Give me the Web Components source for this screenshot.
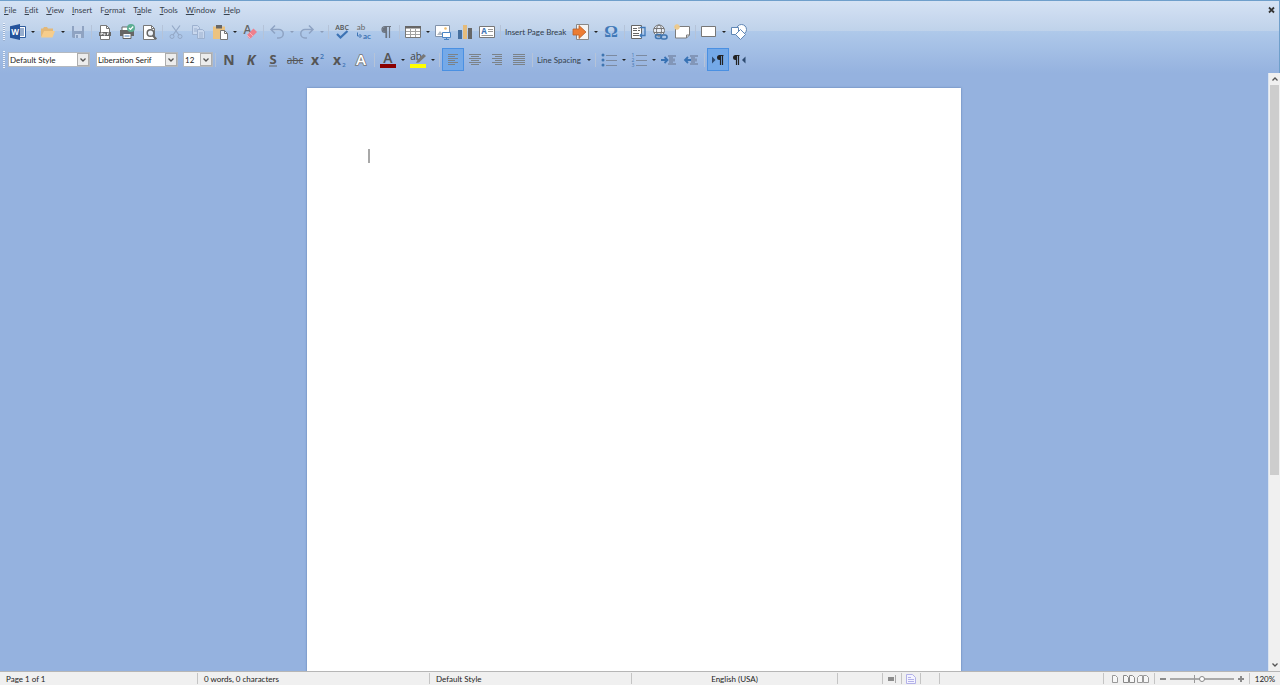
<!DOCTYPE html>
<html lang="en">
<head>
<meta charset="utf-8">
<title>Writer</title>
<style>
  html, body { height: 100%; }
  body {
    margin: 0;
    overflow: hidden;
    font: 8px/12px Lato, "Open Sans", sans-serif;
    color: #333;
  }
</style>
</head>
<body>
<writer-app>
  <menu-bar slot="header">
    <menu-item key="F">File</menu-item>
    <menu-item key="E">Edit</menu-item>
    <menu-item key="V">View</menu-item>
    <menu-item key="I">Insert</menu-item>
    <menu-item key="o">Format</menu-item>
    <menu-item key="a">Table</menu-item>
    <menu-item key="T">Tools</menu-item>
    <menu-item key="W">Window</menu-item>
    <menu-item key="H">Help</menu-item>
  </menu-bar>

  <tool-bar slot="header" label="Standard">
    <tool-button icon="new" label="New" menu></tool-button>
    <tool-button icon="open" label="Open" menu></tool-button>
    <tool-button icon="save" label="Save" disabled></tool-button>
    <tool-separator></tool-separator>
    <tool-button icon="pdf" label="Export as PDF"></tool-button>
    <tool-button icon="print" label="Print"></tool-button>
    <tool-button icon="preview" label="Print Preview"></tool-button>
    <tool-separator></tool-separator>
    <tool-button icon="cut" label="Cut" disabled></tool-button>
    <tool-button icon="copy" label="Copy" disabled></tool-button>
    <tool-button icon="paste" label="Paste" menu></tool-button>
    <tool-button icon="clear" label="Clear Formatting"></tool-button>
    <tool-separator></tool-separator>
    <tool-button icon="undo" label="Undo" menu disabled></tool-button>
    <tool-button icon="redo" label="Redo" menu disabled></tool-button>
    <tool-separator></tool-separator>
    <tool-button icon="spelling" label="Spelling"></tool-button>
    <tool-button icon="autospell" label="Auto Spellcheck"></tool-button>
    <tool-button icon="marks" label="Formatting Marks"></tool-button>
    <tool-separator></tool-separator>
    <tool-button icon="table" label="Insert Table" menu></tool-button>
    <tool-button icon="image" label="Insert Image"></tool-button>
    <tool-button icon="chart" label="Insert Chart"></tool-button>
    <tool-button icon="textbox" label="Insert Text Box"></tool-button>
    <tool-separator></tool-separator>
    <tool-button>Insert Page Break</tool-button>
    <tool-button icon="field" label="Insert Field" menu></tool-button>
    <tool-button icon="omega" label="Special Character"></tool-button>
    <tool-separator></tool-separator>
    <tool-button icon="footnote" label="Insert Footnote"></tool-button>
    <tool-button icon="link" label="Insert Hyperlink"></tool-button>
    <tool-button icon="comment" label="Insert Comment"></tool-button>
    <tool-separator></tool-separator>
    <tool-button icon="rect" label="Rectangle" menu></tool-button>
    <tool-button icon="shapes" label="Show Draw Functions"></tool-button>
  </tool-bar>

  <tool-bar slot="header" label="Formatting">
    <tool-combo label="Paragraph Style" value="Default Style"></tool-combo>
    <tool-combo label="Font Name" value="Liberation Serif"></tool-combo>
    <tool-combo label="Font Size" value="12" small></tool-combo>
    <tool-separator></tool-separator>
    <tool-button icon="bold" label="Bold"></tool-button>
    <tool-button icon="italic" label="Italic"></tool-button>
    <tool-button icon="underline" label="Underline"></tool-button>
    <tool-button icon="strike" label="Strikethrough"></tool-button>
    <tool-button icon="super" label="Superscript"></tool-button>
    <tool-button icon="sub" label="Subscript"></tool-button>
    <tool-button icon="outline" label="Outline"></tool-button>
    <tool-separator></tool-separator>
    <tool-button icon="color" label="Font Color" menu></tool-button>
    <tool-button icon="highlight" label="Highlighting" menu></tool-button>
    <tool-separator></tool-separator>
    <tool-button icon="left" label="Align Left" active></tool-button>
    <tool-button icon="center" label="Center"></tool-button>
    <tool-button icon="right" label="Align Right"></tool-button>
    <tool-button icon="justify" label="Justified"></tool-button>
    <tool-separator></tool-separator>
    <tool-button menu>Line Spacing</tool-button>
    <tool-separator></tool-separator>
    <tool-button icon="bullets" label="Bullets" menu></tool-button>
    <tool-button icon="numbers" label="Numbering" menu></tool-button>
    <tool-button icon="indent" label="Increase Indent"></tool-button>
    <tool-button icon="outdent" label="Decrease Indent"></tool-button>
    <tool-separator></tool-separator>
    <tool-button icon="ltr" label="Left-To-Right" active></tool-button>
    <tool-button icon="rtl" label="Right-To-Left"></tool-button>
  </tool-bar>

  <document-page></document-page>
  <scroll-bar slot="scroll"></scroll-bar>

  <status-bar slot="footer">
    <status-cell>Page 1 of 1</status-cell>
    <status-cell>0 words, 0 characters</status-cell>
    <status-cell>Default Style</status-cell>
    <status-cell center>English (USA)</status-cell>
    <status-cell></status-cell>
    <status-cell center><app-icon name="selection"></app-icon></status-cell>
    <status-cell center><app-icon name="saved"></app-icon></status-cell>
    <status-cell></status-cell>
    <status-cell></status-cell>
    <status-cell center><view-layout></view-layout></status-cell>
    <status-cell center><zoom-slider></zoom-slider></status-cell>
    <status-cell center>120%</status-cell>
  </status-bar>
</writer-app>

<script>
// horizontal rules used by the alignment icons, [x1, x2] for each line
const rules = list => `<g stroke="#7b8288">${list.map(([a, b], i) => `<path d="M${a} ${2.5 + i * 2}H${b}"/>`).join('')}</g>`

const TEXT = 'font-family="Open Sans, Noto Sans, sans-serif" text-anchor="middle"'
const SMALL = 'font-family="Lato, sans-serif" font-size="8" text-anchor="middle"'

// 16x16 drawings
const ICONS = {
  new: `<path d="M7 2.5h8.5v11H7z" fill="#fff" stroke="#2f5c9d"/><path d="M9 5h5M9 7h5M9 9h5M9 11h5" stroke="#2f5c9d"/>
    <path d="M0 2.2 10 0v16L0 13.8z" fill="#25539b"/><text x="5" y="11" font-size="8" font-weight="700" fill="#fff" ${TEXT}>W</text>`,
  open: `<path d="M1 13V4.5h2l1-1.5h3l1 1.5h5V7H5z" fill="#e3b878"/><path d="M4 7h11l-2.5 6.5H1z" fill="#f6cd8c"/>`,
  save: `<path d="M2 2h12v12H3l-1-1z" fill="#8fa3c2"/><path d="M4 2h8v5H4z" fill="#c3d3ea"/><path d="M5 10h6v4H5z" fill="#c3d3ea"/><path d="M6 11h2v3H6z" fill="#8fa3c2"/>`,
  pdf: `<path d="M3.5 1.5h6l3 3v11h-9z" fill="#fff" stroke="#777"/><path d="M9.5 1.5v3h3" fill="none" stroke="#777"/>
    <path d="M2 8h12v4H2z" fill="#666"/><path d="M4 11V9h1.5v1H4M7 9v2h1V9.5M10.5 11V9H12M10.5 10h1" stroke="#fff" stroke-width=".8" fill="none"/>`,
  print: `<path d="M3 3h8v4H3z" fill="#fff" stroke="#666"/><path d="M1 6h14v6H1z" fill="#666"/><path d="M4 9.5h8v5H4z" fill="#fff" stroke="#666"/>
    <path d="M5.5 12h5" stroke="#4a7ebb"/><circle cx="12" cy="4" r="4" fill="#5cae93"/><path d="m10 4 1.5 1.5L14.2 2.5" fill="none" stroke="#fff" stroke-width="1.2"/>`,
  preview: `<path d="M2.5 1.5h8l3 3v11h-11z" fill="#fff" stroke="#777"/><path d="M10.5 1.5v3h3" fill="none" stroke="#777"/>
    <circle cx="9.5" cy="9" r="3.3" fill="#eef3fa" stroke="#666" stroke-width="1.5"/><path d="m11.8 11.5 3.5 3.8" stroke="#666" stroke-width="2"/>`,
  cut: `<g fill="none" stroke="#94a8c6"><path d="M4 1.5 11 11M12 1.5 5 11" stroke-width="1.2"/><circle cx="4" cy="12.5" r="2"/><circle cx="12" cy="12.5" r="2"/></g>`,
  copy: `<g fill="#c9d8ee" stroke="#9db1cf"><path d="M2.5 1.5h5l2 2v7h-7z"/><path d="M7.5 5.5h5l2 2v7h-7z"/></g><path d="M4 5h3M4 7h3M9 9h4M9 11h4M9 13h4" stroke="#9db1cf"/>`,
  paste: `<path d="M1 2.5h12V15H1z" fill="#ecc381"/><path d="M4 1h6v3.5H4z" fill="#666"/><path d="M8.5 6.5h4l3 3v6h-7z" fill="#fff" stroke="#777"/><path d="M12.5 6.5v3h3" fill="none" stroke="#777"/>`,
  clear: `<text x="5.5" y="9.5" font-size="12" font-weight="600" fill="#666" ${TEXT}>A</text><path d="m5 11 6.5-6.5L15 8l-6.5 6.5H7z" fill="#ee7f8d"/><path d="m5 11 3.5 3.5M7.5 8.5 11 12" stroke="#f8b5bd"/>`,
  undo: `<path d="M6 1.5 2 5.5l4 4M2.5 5.5H10a4 4 0 0 1 0 8.5H8" fill="none" stroke="#8ea3c3" stroke-width="1.5"/>`,
  redo: `<path d="m10 1.5 4 4-4 4M13.5 5.5H6A4 4 0 0 0 6 14h2" fill="none" stroke="#8ea3c3" stroke-width="1.5"/>`,
  spelling: `<text x="8" y="6" font-size="7" font-weight="600" fill="#555" ${TEXT}>ABC</text><path d="m3 10 3.5 3.5L13.5 7" fill="none" stroke="#3d73b4" stroke-width="2.2"/>`,
  autospell: `<text x="5" y="6" fill="#666" ${SMALL}>ab</text><text x="11" y="15" font-weight="700" fill="#3d73b4" ${SMALL}>ac</text><path d="M1.5 8.5V12h3M3.5 10l2 2-2 2" fill="none" stroke="#3d73b4"/>`,
  marks: `<path d="M13 2.5H7a3 3 0 0 0 0 6h1V14M8.5 2v12M11.5 2v12" fill="none" stroke="#6c7480" stroke-width="1.2"/><path d="M8 3v5H7a2.5 2.5 0 0 1 0-5z" fill="#6c7480"/>`,
  table: `<path d="M.5 2.5h15v11H.5z" fill="#fff" stroke="#777"/><path d="M0 2h16v2.5H0z" fill="#666"/><path d="M1 7.5h14M1 10.5h14M5.5 5v8M10.5 5v8" stroke="#a2a2a2"/>`,
  image: `<path d="M.5 1.5h14v11H.5z" fill="#fff" stroke="#8293ab"/><circle cx="10.5" cy="4.5" r="1.3" fill="#f0bd6c"/><path d="m2 11 3-4 2.5 3L9 8l3 3z" fill="#b5bcc5"/>
    <path d="M7.5 8.5h8v5h-8z" fill="#fff" stroke="#4a85c5"/><path d="M11.5 14v1.5M9 15.5h5" stroke="#4a85c5"/>`,
  chart: `<path d="M1 6h4v9H1z" fill="#456f9f"/><path d="M6 1h4v14H6z" fill="#e4bb7b"/><path d="M11 4h4v11h-4z" fill="#666"/>`,
  textbox: `<path d="M.5 2.5h15v11H.5z" fill="#fff" stroke="#777"/><text x="5" y="9.5" font-size="8" font-weight="700" fill="#3d73b4" ${TEXT}>A</text><path d="M9 5.5h5M9 7.5h5M2.5 11.5H14" stroke="#999"/>`,
  field: `<path d="M3.5.5h12v15h-12z" fill="#f4f4f4" stroke="#888"/><path d="M0 5h6V1.5L13 8l-7 6.5V11H0z" fill="#ec7c33" stroke="#b9602a" stroke-width=".8"/>`,
  omega: `<text x="8" y="13" font-size="17" font-weight="700" fill="#4179b8" text-anchor="middle" font-family="Liberation Serif, serif">Ω</text>`,
  footnote: `<path d="M1.5 1.5h10v13h-10z" fill="#fff" stroke="#666"/><path d="M3 4.5h4M3 6.5h4M3 9.5h6M3 11.5h6M8 4h2M8 6.5h2" stroke="#666"/><path d="M10 3.5h5v8h-5M12 9.5l-2 2 2 2" fill="none" stroke="#4179b8" stroke-width="1.3"/>`,
  link: `<g fill="none" stroke="#777"><circle cx="7" cy="6.5" r="5.5" fill="#e8eef7"/><ellipse cx="7" cy="6.5" rx="2.5" ry="5.5"/><path d="M2 4.5h10M2 8.5h10"/></g>
    <g fill="none" stroke="#3f75b0" stroke-width="1.6"><rect x="3.5" y="10.5" width="6" height="4" rx="2"/><rect x="9" y="11" width="6" height="4" rx="2"/></g>`,
  comment: `<path d="M1.5 2.5h14V11l-3 3h-11z" fill="#fff" stroke="#7c7c7c"/><path d="M15.5 11h-3v3" fill="none" stroke="#7c7c7c"/><path d="M3 0v6M0 3h6M1 1l4 4M5 1 1 5" stroke="#ecca8e" stroke-width="1.4"/>`,
  rect: `<path d="M.5 2.5h14v10H.5z" fill="#fff" stroke="#777"/>`,
  shapes: `<g fill="#fff" stroke="#5f86b5"><circle cx="10.5" cy="5.5" r="5"/><path d="M.5 3.5h7v7h-7z"/><path d="m9.5 5.5 5 5-5 5-5-5z"/></g>`,
  bold: `<text x="8" y="13" font-size="14" font-weight="700" fill="#555" ${TEXT}>N</text>`,
  italic: `<text x="8" y="13" font-size="14" font-weight="700" font-style="italic" fill="#555" ${TEXT}>K</text>`,
  underline: `<text x="8" y="12" font-size="13" font-weight="700" fill="#555" ${TEXT}>S</text><path d="M4 14h8" stroke="#666"/>`,
  strike: `<text x="8" y="12" font-size="10" font-weight="400" fill="#555" ${TEXT}>abc</text><path d="M0 8.5h16" stroke="#555"/>`,
  super: `<text x="6" y="13" font-size="14" font-weight="700" fill="#555" ${TEXT}>x</text><text x="13" y="7" font-size="7" font-weight="600" fill="#3d73b4" ${TEXT}>2</text>`,
  sub: `<text x="6" y="13" font-size="14" font-weight="700" fill="#555" ${TEXT}>x</text><text x="13" y="15" font-size="6" font-weight="600" fill="#3d73b4" ${TEXT}>2</text>`,
  outline: `<text x="8" y="13" font-size="15" font-weight="600" fill="#fff" stroke="#777" stroke-width="1.6" paint-order="stroke" ${TEXT}>A</text>`,
  color: `<text x="8" y="11" font-size="14" font-weight="600" fill="#555" ${TEXT}>A</text><path d="M0 12h16v4H0z" fill="#8b0000"/>`,
  highlight: `<text x="6" y="8" font-size="10" fill="#444" ${TEXT}>ab</text><path d="m6 11 1.5-3 6-6L16 4 9 10.5z" fill="#777"/><path d="M0 12h16v4H0z" fill="#ff0"/>`,
  left: rules([[3, 13], [3, 10], [3, 13], [3, 10], [3, 13], [3, 10]]),
  center: rules([[2, 14], [4, 12], [2, 14], [4, 12], [2, 14], [4, 12]]),
  right: rules([[3, 13], [6, 13], [3, 13], [6, 13], [3, 13], [6, 13]]),
  justify: rules([[2, 14], [2, 14], [2, 14], [2, 14], [2, 14], [2, 14]]),
  bullets: `<g fill="#3f75b0"><circle cx="2" cy="3" r="1.5"/><circle cx="2" cy="8" r="1.5"/><circle cx="2" cy="13" r="1.5"/></g><path d="M5 3.5h11M5 8.5h11M5 13.5h11" stroke="#7c8aa0"/>`,
  numbers: `<g font-size="5" fill="#3f75b0" ${TEXT}><text x="2" y="5">1</text><text x="2" y="10">2</text><text x="2" y="15">3</text></g><path d="M5 3.5h11M5 8.5h11M5 13.5h11" stroke="#7c8aa0"/>`,
  indent: `<path d="M7 3h8v2h-3v1.5h2v3h-2V11h3v2H7v-2h1V5H7z" fill="#8296b8"/><path d="M0 8h6M3.5 5 6.5 8l-3 3" fill="none" stroke="#3872b4" stroke-width="1.8"/>`,
  outdent: `<path d="M7 3h8v2h-3v1.5h2v3h-2V11h3v2H7v-2h1V5H7z" fill="#8296b8"/><path d="M2 8h6M5 5 2 8l3 3" fill="none" stroke="#3872b4" stroke-width="1.8"/>`,
  ltr: `<path d="M2 4.5 5.5 8 2 11.5z" fill="#2d4a70"/><path d="M10.5 3v10M12.5 3v10M9 3.5h4.5" stroke="#222" stroke-width="1.2"/><path d="M11 3v5H9.5a2.5 2.5 0 0 1 0-5z" fill="#222"/>`,
  rtl: `<path d="M13.5 4.5 10 8l3.5 3.5z" fill="#2d4a70"/><path d="M4.5 3v10M6.5 3v10M3 3.5h4.5" stroke="#222" stroke-width="1.2"/><path d="M5 3v5H3.5a2.5 2.5 0 0 1 0-5z" fill="#222"/>`,
  selection: `<path d="M4 6h6v4H4z" fill="#8c8c8c"/><path d="M11.5 4v8" stroke="#aaa"/>`,
  saved: `<path d="M3.5 3.5h6l3 3v6h-9z" fill="#f4f4ff" stroke="#b3b1e8"/><path d="M5 6.5h3M5 8.5h6M5 10.5h6" stroke="#b3b1e8"/>`,
  pageOne: `<path d="M5.5 4.5h3l2 2v5h-5z" fill="#f7f7f7" stroke="#999"/>`,
  pageMulti: `<path d="M2.5 4.5h3l2 2v5h-5zM8.5 4.5h3l2 2v5h-5z" fill="#f7f7f7" stroke="#888"/>`,
  pageBook: `<path d="M2.5 6.5l2-2h3v7h-5zM8.5 4.5h3l2 2v5h-5z" fill="#f7f7f7" stroke="#999"/>`,
  chevron: `<path d="m5.5 6.5 2.5 2.5 2.5-2.5" fill="none" stroke="#555" stroke-width="1.3"/>`,
  chevronUp: `<path d="m5.5 9.5 2.5-2.5 2.5 2.5" fill="none" stroke="#555" stroke-width="1.3"/>`,
  close: `<path d="m6 5.5 5 5M11 5.5l-5 5" stroke="#333" stroke-width="1.8"/>`
}

const RESET = `button { margin: 0; padding: 0; border: 0; background: none; font: inherit; color: inherit; }`

class BaseElement extends HTMLElement {
  constructor() {
    super()
    this.attachShadow({mode: 'open'})
  }

  connectedCallback() {
    this.shadowRoot.innerHTML = `<style>${RESET}${this.styles()}</style>${this.markup()}`
  }
}

class AppIcon extends BaseElement {
  styles() {
    return `
      :host { display: block; flex: none; width: 16px; height: 16px; }
      svg { display: block; overflow: visible; }
    `
  }

  markup() {
    return `<svg width="16" height="16" viewBox="0 0 16 16" aria-hidden="true">${ICONS[this.getAttribute('name')]}</svg>`
  }
}

class WriterApp extends BaseElement {
  styles() {
    return `
      :host { display: flex; flex-direction: column; height: 100vh; background: #95b2df; }
      header {
        flex: none;
        border-top: 1px solid #6f9fcb;
        border-right: 1px solid #6f9fcb;
        background: linear-gradient(#d5e2f4, #bfd2ea 30px, #afc9ea 30px, #95b2df);
      }
      main { display: flex; flex: 1; min-height: 0; }
      .canvas { flex: 1; padding-top: 15px; overflow: hidden; }
    `
  }

  markup() {
    return `
      <header><slot name="header"></slot></header>
      <main><div class="canvas"><slot></slot></div><slot name="scroll"></slot></main>
      <slot name="footer"></slot>
    `
  }
}

class MenuBar extends BaseElement {
  styles() {
    return `
      :host { display: flex; align-items: center; height: 16px; padding-top: 1px; color: #38424e; }
      nav { display: flex; flex: 1; }
      button { display: flex; }
    `
  }

  markup() {
    return `<nav><slot></slot></nav><button aria-label="Close Document"><app-icon name="close"></app-icon></button>`
  }
}

class MenuItem extends BaseElement {
  styles() {
    return `
      :host { display: block; }
      button { display: block; padding: 0 4px; }
      u { text-underline-offset: 1px; }
    `
  }

  markup() {
    const key = this.getAttribute('key')
    return `<button>${this.textContent.replace(key, `<u>${key}</u>`)}</button>`
  }
}

class ToolBar extends BaseElement {
  styles() {
    return `
      :host { display: flex; align-items: center; height: 27px; }
      :host(:last-of-type) { padding-top: 1px; }
      .grip { width: 2px; height: 18px; margin: 0 2px 0 3px; background: repeating-linear-gradient(#eef4fc 0 1px, #9cb2d2 1px 2px); }
      .items { display: flex; align-items: center; }
    `
  }

  markup() {
    return `<div class="grip"></div><div class="items" role="toolbar" aria-label="${this.getAttribute('label')}"><slot></slot></div>`
  }
}

class ToolSeparator extends BaseElement {
  styles() {
    return `
      :host { display: block; width: 1px; height: 14px; margin: 0 2px; background: #b5c3d8; }
    `
  }

  markup() { return '' }
}

class ToolButton extends BaseElement {
  styles() {
    return `
      :host { display: flex; color: #333d49; }
      button { display: flex; align-items: center; justify-content: center; box-sizing: border-box; height: 23px; white-space: nowrap; }
      .icon { width: 22px; }
      .text { padding: 0 4px 0 2px; }
      .drop { width: 8px; }
      .drop::after { content: ""; border: 2px solid transparent; border-top-color: #222; border-bottom: 0; }
      .drop:disabled::after { border-top-color: #8b9dba; }
      :host([active]) .icon { border: 1px solid #4a90e2; background: #74a9e8; }
    `
  }

  markup() {
    const icon = this.getAttribute('icon')
    const label = this.getAttribute('label') || this.textContent
    const disabled = this.hasAttribute('disabled') ? 'disabled' : ''
    const main = icon
      ? `<button class="icon" aria-label="${label}" ${disabled}><app-icon name="${icon}"></app-icon></button>`
      : `<button class="text"><slot></slot></button>`
    const drop = this.hasAttribute('menu') ? `<button class="drop" aria-label="${label} options" ${disabled}></button>` : ''
    return main + drop
  }
}

class ToolCombo extends BaseElement {
  styles() {
    return `
      :host { display: block; width: 82px; margin: 0 5px 0 1px; }
      :host([small]) { width: 30px; margin: 0; }
      label { display: grid; height: 15px; box-sizing: border-box; border: 1px solid #b4b9c0; background: #fff; }
      select, .drop { grid-area: 1 / 1; }
      select { appearance: none; min-width: 0; margin: 0; padding: 0 12px 0 1px; border: 0; background: none; font: inherit; color: #222; }
      .drop {
        display: flex; align-items: center; justify-content: center; justify-self: end;
        box-sizing: border-box; width: 12px; border: 1px solid #adadad; background: #ececec; overflow: hidden; pointer-events: none;
      }
    `
  }

  markup() {
    return `
      <label>
        <select aria-label="${this.getAttribute('label')}"><option>${this.getAttribute('value')}</option></select>
        <span class="drop"><app-icon name="chevron"></app-icon></span>
      </label>
    `
  }
}

class DocumentPage extends BaseElement {
  styles() {
    return `
      :host {
        display: block; box-sizing: border-box; width: 654px; aspect-ratio: 17 / 22; margin: 0 auto; padding: 61px;
        background: #fff; box-shadow: 0 0 2px #5c7dae;
      }
      .caret { width: 2px; height: 14px; background: #a8a8a8; }
    `
  }

  markup() { return `<div class="caret"></div>` }
}

class ScrollBar extends BaseElement {
  styles() {
    return `
      :host { display: flex; flex-direction: column; width: 12px; box-sizing: border-box; border-left: 1px solid #dbe4f1; background: #f0f0f0; }
      button { display: flex; align-items: center; justify-content: center; height: 12px; overflow: hidden; }
      .track { flex: 1; padding: 0 1px; }
      .thumb { height: 68%; background: #cdcdcd; }
    `
  }

  markup() {
    return `
      <button aria-label="Scroll up"><app-icon name="chevronUp"></app-icon></button>
      <div class="track"><div class="thumb"></div></div>
      <button aria-label="Scroll down"><app-icon name="chevron"></app-icon></button>
    `
  }
}

class StatusBar extends BaseElement {
  styles() {
    return `
      :host {
        display: grid; flex: none; height: 13px; border-top: 1px solid #b6b6b6; background: #f0f0f0; color: #222;
        grid-template-columns: 198fr 232fr 202fr 206fr 45fr 19px 19px 19px 164fr 51px 95px 30px;
      }
    `
  }

  markup() { return `<slot></slot>` }
}

class StatusCell extends BaseElement {
  styles() {
    return `
      :host {
        display: flex; align-items: center; box-sizing: border-box; min-width: 0; height: 11px; margin-top: 1px; padding-left: 6px;
        border-right: 1px solid #c4c4c4; white-space: nowrap; overflow: hidden;
      }
      :host([center]) { justify-content: center; padding: 0; }
      :host(:last-child) { border: 0; }
    `
  }

  markup() { return `<slot></slot>` }
}

class ViewLayout extends BaseElement {
  styles() {
    return `
      :host, button { display: flex; }
      button { width: 14px; justify-content: center; }
    `
  }

  markup() {
    return `
      <button aria-label="Single-page view"><app-icon name="pageOne"></app-icon></button>
      <button aria-label="Multiple-page view"><app-icon name="pageMulti"></app-icon></button>
      <button aria-label="Book view"><app-icon name="pageBook"></app-icon></button>
    `
  }
}

class ZoomSlider extends BaseElement {
  styles() {
    return `
      :host { display: flex; align-items: center; gap: 4px; }
      button { display: flex; }
      path { stroke: #8a8a8a; stroke-width: 2; }
      input {
        appearance: none; width: 64px; height: 8px; margin: 0;
        background:
          linear-gradient(#999, #999) 24px 0 / 1px 8px no-repeat,
          linear-gradient(#aaa, #aaa) 0 50% / 100% 2px no-repeat;
      }
      input::-webkit-slider-thumb { appearance: none; width: 6px; height: 6px; box-sizing: border-box; border: 1px solid #888; border-radius: 50%; background: #fff; }
    `
  }

  markup() {
    return `
      <button aria-label="Zoom out"><svg width="6" height="6"><path d="M0 3h6"/></svg></button>
      <input type="range" aria-label="Zoom" min="0" max="100" value="50">
      <button aria-label="Zoom in"><svg width="6" height="6"><path d="M0 3h6M3 0v6"/></svg></button>
    `
  }
}

customElements.define('app-icon', AppIcon)
customElements.define('writer-app', WriterApp)
customElements.define('menu-bar', MenuBar)
customElements.define('menu-item', MenuItem)
customElements.define('tool-bar', ToolBar)
customElements.define('tool-separator', ToolSeparator)
customElements.define('tool-button', ToolButton)
customElements.define('tool-combo', ToolCombo)
customElements.define('document-page', DocumentPage)
customElements.define('scroll-bar', ScrollBar)
customElements.define('status-bar', StatusBar)
customElements.define('status-cell', StatusCell)
customElements.define('view-layout', ViewLayout)
customElements.define('zoom-slider', ZoomSlider)
</script>
</body>
</html>
